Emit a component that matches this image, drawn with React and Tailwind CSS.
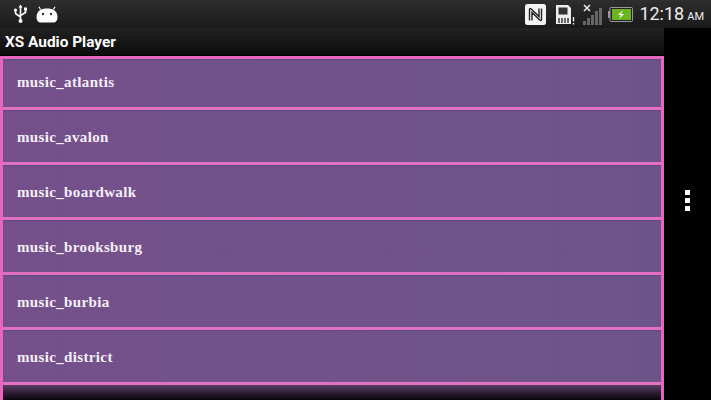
const tracks = ['music_atlantis', 'music_avalon', 'music_boardwalk', 'music_brooksburg', 'music_burbia', 'music_district'];

function UsbIcon() {
  return (
    <svg width="17" height="20" viewBox="0 0 17 20" fill="none" stroke="#fff" strokeWidth="1.6">
      <path d="M8.5 3v13M8.5 13L3.5 9.5V7M8.5 11.5l5-3V6" />
      <path d="M8.5 0.5l2 3h-4z" fill="#fff" stroke="none" />
      <circle cx="3.5" cy="6" r="1.6" fill="#fff" stroke="none" />
      <rect x="12" y="3.5" width="3" height="3" fill="#fff" stroke="none" />
      <circle cx="8.5" cy="17" r="2" fill="#fff" stroke="none" />
    </svg>
  );
}

function AndroidIcon() {
  return (
    <svg width="22" height="17" viewBox="0 0 22 17">
      <path d="M4.5 3.5L3 0.8M17.5 3.5L19 0.8" stroke="#fff" strokeWidth="1.2" />
      <path d="M0.5 11C0.5 5 5 2.5 11 2.5S21.5 5 21.5 11c0 3.5-1.5 5.5-4 5.5h-13C2 16.500.5 14.500.5 11z" fill="#fff" />
      <circle cx="7" cy="8" r="1.2" fill="#333" />
      <circle cx="15" cy="8" r="1.2" fill="#333" />
    </svg>
  );
}

function NfcIcon() {
  return (
    <svg width="21" height="21" viewBox="0 0 21 21">
      <rect width="21" height="21" rx="2.5" fill="#f4f4f4" />
      <path d="M4.500 16.500V5.500c0-.8.800-1.200 1.500-.7L14 12.500V4.500M16.500 4.500v11c0 .8-.8 1.200-1.500.7L7 8.500v8" fill="none" stroke="#222" strokeWidth="1.4" />
    </svg>
  );
}

function SdIcon() {
  return (
    <svg width="20" height="21" viewBox="0 0 20 21">
      <path d="M1 1h12l3 3v16H1z" fill="#eee" />
      <rect x="3.500" y="3.500" width="9" height="7" fill="#333" />
      <path d="M4 14v5M7 14v5M10 14v5M13 14v5" stroke="#333" strokeWidth="1.400" />
      <path d="M18.500 13v4.500M18.500 19v1.500" stroke="#eee" strokeWidth="1.400" />
    </svg>
  );
}

function SignalIcon() {
  return (
    <svg width="20" height="24" viewBox="0 0 20 24">
      <path d="M1 3l6 6M7 3L1 9" stroke="#eee" strokeWidth="1.500" />
      <rect x="0" y="19" width="3" height="4" fill="#666" />
      <rect x="4" y="16" width="3" height="7" fill="#666" />
      <rect x="8" y="13" width="3" height="10" fill="#666" />
      <rect x="12" y="9" width="3" height="14" fill="#666" />
      <rect x="16" y="6" width="3" height="17" fill="#666" />
    </svg>
  );
}

function BatteryIcon() {
  return (
    <svg width="25" height="15" viewBox="0 0 25 15">
      <rect x="0" y="4" width="2" height="7" fill="#999" />
      <rect x="2" y="0.500" width="22.500" height="14" rx="1" fill="#222" stroke="#999" />
      <rect x="4" y="2" width="19" height="11" fill="#6cb41e" />
      <path d="M15 3l-5 5h3l-2 4 5-5h-3z" fill="#fff" />
    </svg>
  );
}

export default function App() {
  return (
    <div className="w-[711px] h-[400px] bg-black overflow-hidden flex flex-col font-['Roboto',sans-serif]">
      <div className="h-[28px] shrink-0 flex items-center justify-between bg-gradient-to-b from-[#2e2e2e] to-[#1a1a1a] pl-[12px] pr-[7px]">
        <div className="flex items-center gap-[7px]">
          <UsbIcon />
          <AndroidIcon />
        </div>
        <div className="flex items-center">
          <NfcIcon />
          <div className="ml-[9px]"><SdIcon /></div>
          <div className="ml-[8px]"><SignalIcon /></div>
          <div className="ml-[5px]"><BatteryIcon /></div>
          <span className="ml-[6px] text-[18px] leading-none text-[#eeeeee]">12:18</span>
          <span className="ml-[3px] text-[11px] leading-none text-[#eeeeee] mt-[4px]">AM</span>
        </div>
      </div>
      <div className="flex flex-1 min-h-0">
        <div className="w-[664px] flex flex-col">
          <div className="h-[27px] shrink-0 flex items-center pl-[5px] pt-[3px] bg-gradient-to-b from-[#222222] to-[#0c0c0c] text-white text-[15.4px] font-bold">
            XS Audio Player
          </div>
          <div className="relative flex-1 min-h-0 overflow-hidden border-x-[3px] border-t-[3px] border-[#e766bb] mt-px">
            {tracks.map((name, i) => (
              <div key={name} className={(i === 0 ? 'h-[51px] pb-[2px] ' : 'h-[55px] pt-[2px] ') + "box-border border-b-[3px] border-[#e271c0] bg-gradient-to-r from-[#75508b] to-[#6d5488] shadow-[inset_0_1px_1px_#5b4a88] flex items-center pl-[14px] font-['Liberation_Serif',serif] font-bold text-[15px] tracking-[0.35px] text-[#f6effa]"}>
                {name}
              </div>
            ))}
            <div className="absolute left-0 right-0 bottom-0 h-[15px] bg-gradient-to-b from-[#5a3d68] to-[#0a060c]" />
          </div>
        </div>
        <div className="flex-1 flex flex-col items-center justify-center gap-[3px] pb-[28px]">
          <div className="w-[5px] h-[5px] bg-white" />
          <div className="w-[5px] h-[5px] bg-white" />
          <div className="w-[5px] h-[5px] bg-white" />
        </div>
      </div>
    </div>
  );
}
